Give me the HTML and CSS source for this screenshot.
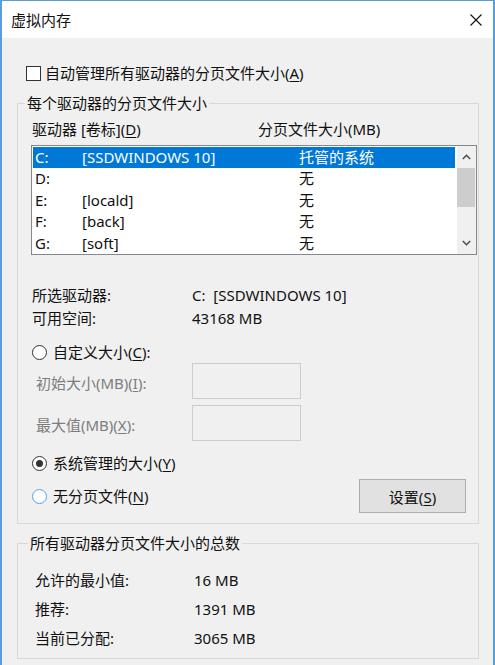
FILE: index.html
```html
<!DOCTYPE html>
<html lang="zh-CN">
<head>
<meta charset="utf-8">
<title>虚拟内存</title>
<link rel="stylesheet" href="styles.css">
</head>
<body>
<div class="window">
  <div class="titlebar">
    <span class="title">虚拟内存</span>
    <svg class="close" width="12" height="12" viewBox="0 0 12 12"><path d="M0.5 0.5 L11.5 11.5 M11.5 0.5 L0.5 11.5" stroke="#111" stroke-width="1.1" fill="none"/></svg>
  </div>
  <div class="content">
    <div class="check-row"><span class="checkbox"></span><span>自动管理所有驱动器的分页文件大小(<u>A</u>)</span></div>

    <fieldset class="group group-drives">
      <legend>每个驱动器的分页文件大小</legend>
      <div class="list-head"><span class="col-drive">驱动器 [卷标](<u>D</u>)</span><span>分页文件大小(MB)</span></div>
      <div class="listbox">
        <div class="rows">
          <div class="row selected"><span>C:</span><span>[SSDWINDOWS 10]</span><span>托管的系统</span></div>
          <div class="row"><span>D:</span><span></span><span>无</span></div>
          <div class="row"><span>E:</span><span>[locald]</span><span>无</span></div>
          <div class="row"><span>F:</span><span>[back]</span><span>无</span></div>
          <div class="row"><span>G:</span><span>[soft]</span><span>无</span></div>
        </div>
        <div class="scrollbar">
          <div class="sb-btn"><svg width="9" height="6" viewBox="0 0 9 6"><path d="M0.8 5 L4.5 1.3 L8.2 5" stroke="#505050" stroke-width="1.6" fill="none"/></svg></div>
          <div class="sb-thumb"></div>
          <div class="sb-track"></div>
          <div class="sb-btn"><svg width="9" height="6" viewBox="0 0 9 6"><path d="M0.8 1 L4.5 4.7 L8.2 1" stroke="#505050" stroke-width="1.6" fill="none"/></svg></div>
        </div>
      </div>

      <div class="info">
        <div class="info-row"><span class="info-key">所选驱动器:</span><span>C:&nbsp; [SSDWINDOWS 10]</span></div>
        <div class="info-row"><span class="info-key">可用空间:</span><span>43168 MB</span></div>
      </div>

      <div class="radio-row first"><span class="radio"></span><span>自定义大小(<u>C</u>):</span></div>
      <div class="field-row"><span class="field-label">初始大小(MB)(<u>I</u>):</span><span class="field"></span></div>
      <div class="field-row second"><span class="field-label">最大值(MB)(<u>X</u>):</span><span class="field"></span></div>
      <div class="radio-row mid"><span class="radio checked"></span><span>系统管理的大小(<u>Y</u>)</span></div>
      <div class="last-row">
        <div class="radio-row"><span class="radio focus"></span><span>无分页文件(<u>N</u>)</span></div>
        <button class="btn">设置(<u>S</u>)</button>
      </div>
    </fieldset>

    <fieldset class="group group-total">
      <legend>所有驱动器分页文件大小的总数</legend>
      <div class="total-row"><span class="total-key">允许的最小值:</span><span>16 MB</span></div>
      <div class="total-row"><span class="total-key">推荐:</span><span>1391 MB</span></div>
      <div class="total-row"><span class="total-key">当前已分配:</span><span>3065 MB</span></div>
    </fieldset>
  </div>
</div>
</body>
</html>
```
FILE: styles.css
```css
html, body {
  margin: 0;
  padding: 0;
  background: #f0f0f0;
}
body {
  font-family: "Noto Sans", "Noto Sans CJK SC", sans-serif;
  font-size: 15px;
  color: #111;
}
u { text-decoration: underline; text-underline-offset: 2px; text-decoration-thickness: 1px; }

.window {
  width: 495px;
  height: 665px;
  box-sizing: border-box;
  border: 2px solid #5a9ddf;
  border-top-width: 1px;
  border-bottom: none;
  background: #f0f0f0;
  overflow: hidden;
}
.titlebar {
  height: 37px;
  background: #fff;
  display: flex;
  align-items: center;
  justify-content: space-between;
  padding: 0 11px 0 9px;
}
.title { line-height: 20px; }
.close { display: block; margin-top: 1px; }

.content {
  padding-top: 25px;
}
.check-row {
  height: 20px;
  display: flex;
  align-items: center;
  margin-left: 24px;
  gap: 4px;
  line-height: 20px;
}
.checkbox {
  width: 13px;
  height: 13px;
  border: 1px solid #333;
  background: #fff;
  box-sizing: content-box;
}

.group {
  margin: 0 14px 0 15px;
  border: 1px solid #d9d9d9;
  min-width: 0;
}
.group legend {
  line-height: 20px;
  padding: 0 2px;
  margin-left: -7px;
}
.group-drives {
  margin-top: 10px;
  padding: 6px 12px 10px 14px;
}
.list-head {
  display: flex;
  line-height: 20px;
  height: 20px;
}
.col-drive { width: 226px; }

.listbox {
  margin-top: 6px;
  margin-left: -1px;
  width: 446px;
  height: 110px;
  box-sizing: border-box;
  border: 1px solid #828790;
  background: #fff;
  display: flex;
}
.rows {
  flex: 1;
  padding: 1px 2px 1px 1px;
}
.row {
  display: grid;
  grid-template-columns: 47px 217px 1fr;
  height: 21.4px;
  line-height: 21.4px;
  padding-left: 2px;
  white-space: nowrap;
}
.row.selected {
  background: #0078d7;
  color: #fff;
}
.scrollbar {
  width: 19px;
  background: #f0f0f0;
  display: flex;
  flex-direction: column;
}
.sb-btn {
  height: 22px;
  display: flex;
  align-items: center;
  justify-content: center;
}
.sb-thumb {
  height: 39px;
  margin: 0 1px 0 0;
  background: #cdcdcd;
}
.sb-track { flex: 1; }

.info { margin-top: 29px; }
.info-row {
  display: flex;
  height: 23px;
  line-height: 23px;
}
.info-key { width: 160px; }

.radio-row {
  display: flex;
  align-items: center;
  gap: 6px;
  height: 20px;
  line-height: 20px;
}
.radio-row.first { margin-top: 12px; }
.radio-row.mid { margin-top: 12px; }
.radio {
  width: 13px;
  height: 13px;
  border: 1px solid #333;
  border-radius: 50%;
  background: #fff;
  position: relative;
}
.radio.checked::after {
  content: "";
  position: absolute;
  left: 3px;
  top: 3px;
  width: 7px;
  height: 7px;
  border-radius: 50%;
  background: #333;
}
.radio.focus { border-color: #4ea3ea; }

.field-row {
  display: flex;
  align-items: center;
  margin-top: 1px;
  height: 36px;
}
.field-row.second { margin-top: 6px; }
.field-label {
  width: 156px;
  padding-left: 4px;
  padding-top: 4px;
  color: #7d7d7d;
  line-height: 20px;
}
.field {
  width: 109px;
  height: 36px;
  box-sizing: border-box;
  border: 1px solid #cccccc;
  background: #f0f0f0;
}

.last-row {
  margin-top: 6px;
  display: flex;
  align-items: center;
  justify-content: space-between;
  height: 34px;
}
.btn {
  width: 107px;
  height: 34px;
  box-sizing: border-box;
  border: 1px solid #adadad;
  background: #e1e1e1;
  font: inherit;
  color: #111;
  padding: 0;
}

.group-total {
  margin-top: 9px;
  padding: 13px 12px 5px 17px;
}
.total-row {
  display: flex;
  height: 29px;
  line-height: 29px;
}
.total-key { width: 159px; }
```
